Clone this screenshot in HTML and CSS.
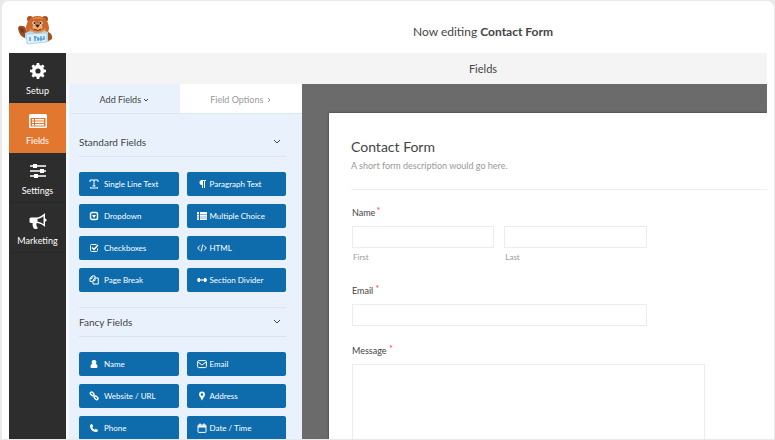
FILE: index.html
```html
<!DOCTYPE html>
<html lang="en">
<head>
    <meta charset="UTF-8">
    <meta name="viewport" content="width=device-width, initial-scale=1.0">
    <title>Form Builder</title>
    <link rel="stylesheet" href="styles.css">
</head>
<body>
    <div class="builder">
        <header class="header">
            <svg class="logo" viewBox="0 0 36 30" role="img" aria-label="Bear mascot">
                <circle cx="13" cy="4" r="3" fill="#a9501c"/>
                <circle cx="28" cy="4" r="3" fill="#a9501c"/>
                <path d="M1 13q1-3 4-2q4 0 4 4l3 5-4 3q-6-2-7-10z" fill="#9b4a20"/>
                <path d="M3 13l3 1 1 4-3-2z" fill="#6e3215"/>
                <path d="M11 6q3-5 9.500-5t9.500 5q4 7 0 13H11q-4-6 0-13z" fill="#c9682a"/>
                <path d="M14 4q7-4 13 0-6-1-13 0z" fill="#e58f49"/>
                <path d="M12 13q8 7 17 0-1 6-8 6t-9-6z" fill="#e39a5d"/>
                <ellipse cx="20.500" cy="12" rx="5" ry="3.500" fill="#edb17b"/>
                <circle cx="17" cy="8" r="1.700" fill="#f3e5d8"/>
                <circle cx="24" cy="8" r="1.700" fill="#f3e5d8"/>
                <circle cx="17.500" cy="8" r="1" fill="#30180d"/>
                <circle cx="23.500" cy="8" r="1" fill="#30180d"/>
                <path d="M18 9.500h5l-2 3h-1z" fill="#3b1c10"/>
                <path d="M17 14q4 3 7 0" fill="none" stroke="#6b2f16"/>
                <path d="M8 18l5-2 7 3 8-3 6 2 1 6-4 3-23-3z" fill="#b9dcf0"/>
                <path d="M31 17q5 2 4 7l-4 2z" fill="#a9501c"/>
                <path d="M9 19l21-1v9l-20 2z" fill="#dceffa" stroke="#8fc3e3" stroke-width=".6"/>
                <path d="M13 22v4M18 21v5M21 22v4M24 21v5M27 21v4M17 22h3M20 24h7" stroke="#3f91c6" stroke-width="1.200"/>
            </svg>
            <div class="editing">Now editing <strong>Contact Form</strong></div>
        </header>

        <div class="main">
            <nav class="sidebar">
                <a href="#setup" class="side-link">
                    <svg viewBox="0 0 16 16"><path fill-rule="evenodd" fill="currentColor" d="M6.800 0h2.400l.4 2.100 1.400.6 1.800-1.200 1.700 1.700-1.200 1.800.6 1.400 2.100.4v2.400l-2.100.4-.6 1.400 1.200 1.800-1.700 1.700-1.800-1.200-1.400.6-.4 2.100H6.800l-.4-2.100-1.400-.6-1.800 1.200-1.700-1.700 1.200-1.800-.6-1.400L0 9.200V6.800l2.100-.4.6-1.400-1.200-1.800 1.700-1.700L5 2.700l1.400-.6zM8 5.400a2.600 2.600 0 1 0 0 5.200 2.600 2.600 0 0 0 0-5.200z"/></svg>
                    <span>Setup</span>
                </a>
                <a href="#fields" class="side-link active">
                    <svg class="wide" viewBox="0 0 18 16"><path fill-rule="evenodd" fill="currentColor" d="M1.500 1h15A1.500 1.500 0 0 1 18 2.500v11a1.500 1.500 0 0 1-1.500 1.500h-15A1.500 1.500 0 0 1 0 13.500v-11A1.500 1.500 0 0 1 1.500 1zM1.500 5v8.500h15V5zM3 6h2v1.400H3zM6 6h9v1.400H6zM3 8.500h2v1.400H3zM6 8.500h9v1.400H6zM3 11h2v1.400H3zM6 11h9v1.400H6z"/></svg>
                    <span>Fields</span>
                </a>
                <a href="#settings" class="side-link">
                    <svg viewBox="0 0 16 16"><path d="M0 3h16M0 8h16M0 13h16" stroke="currentColor" stroke-width="1.600"/><path d="M3 1h4v4H3zM10 6h4v4h-4zM4 11h4v4H4z" fill="currentColor"/></svg>
                    <span>Settings</span>
                </a>
                <a href="#marketing" class="side-link">
                    <svg class="wide" viewBox="0 0 18 16"><path fill-rule="evenodd" fill="currentColor" d="M16 0v5.500a1.600 1.600 0 0 1 0 3.200V14c-2-2-5-3.600-8-3.900-1 .5-1 1.700-.2 2.300-.6 1 .3 1.700 1.200 2.500-1 1.300-3.400 1.300-4.500.4-.5-1.700-1.300-3.100-.8-5.300H2A1.500 1.500 0 0 1 .5 8.500V6A1.500 1.500 0 0 1 2 4.500h5C10 4.500 13.500 2.500 16 0zM14.500 3.200C12.600 4.700 10.700 5.600 8.500 5.900v2.900c2.200.3 4.200 1.100 6 2.500z"/></svg>
                    <span>Marketing</span>
                </a>
            </nav>

            <div class="content">
                <div class="toolbar">Fields</div>
                <div class="workspace">
                    <aside class="panel">
                        <div class="tabs">
                            <button type="button" class="tab active">Add Fields <svg viewBox="0 0 6 6"><path d="M1 2l2 2 2-2"/></svg></button>
                            <button type="button" class="tab">Field Options <svg viewBox="0 0 6 6"><path d="M2 1l2 2-2 2"/></svg></button>
                        </div>

                        <section class="group">
                            <h3 class="group-title">Standard Fields <svg viewBox="0 0 8 8"><path d="M1 2l3 3 3-3"/></svg></h3>
                            <div class="field-buttons">
                                <button type="button"><svg viewBox="0 0 10 10"><path d="M1 3V1h8v2M5 1v6M3.500 7h3M1 9h8M2 8L1 9M8 8l1 1"/></svg>Single Line Text</button>
                                <button type="button"><svg viewBox="0 0 10 10"><path class="solid" d="M9 1v1H8v7H7V2H6v7H5V6a2.500 2.500 0 0 1 0-5z"/></svg>Paragraph Text</button>
                                <button type="button"><svg viewBox="0 0 10 10"><rect x="1.500" y="1.500" width="7" height="7" rx="1.500" stroke-width="1.400"/><path class="solid" d="M3 4h4L5 7z"/></svg>Dropdown</button>
                                <button type="button"><svg viewBox="0 0 10 10"><path class="solid" d="M0 1h2v2H0zM3 1h7v2H3zM0 3.400h2v1.500H0zM3 3.400h7v1.500H3zM0 5.300h2v1.500H0zM3 5.300h7v1.500H3zM0 7.200h2V9H0zM3 7.200h7V9H3z"/></svg>Multiple Choice</button>
                                <button type="button"><svg viewBox="0 0 10 10"><path d="M8.500 5.500v2a1 1 0 0 1-1 1h-5a1 1 0 0 1-1-1v-5a1 1 0 0 1 1-1h5"/><path d="M3 4.500l2 2 4-4.500" stroke-width="1.500"/></svg>Checkboxes</button>
                                <button type="button"><svg viewBox="0 0 10 10"><path d="M3 2.500L.7 5 3 7.500M7 2.500L9.300 5 7 7.500M5.800 1.500l-1.600 7"/></svg>HTML</button>
                                <button type="button"><svg viewBox="0 0 10 10"><path d="M3.500 6.500H1V3.500L3 1h3v2M3 1v2.500H1M4 5.500l2-2.500h3.300v6H4zM6 3v2.500H4"/></svg>Page Break</button>
                                <button type="button"><svg viewBox="0 0 10 10"><path d="M1 5h8" stroke-width="1.200"/><path class="solid" d="M0 5l1-2h2v4H1zM10 5L9 3H7v4h2z"/></svg>Section Divider</button>
                            </div>
                        </section>

                        <section class="group">
                            <h3 class="group-title ruled">Fancy Fields <svg viewBox="0 0 8 8"><path d="M1 2l3 3 3-3"/></svg></h3>
                            <div class="field-buttons">
                                <button type="button"><svg viewBox="0 0 10 10"><path class="solid" d="M5 1a2.200 2.200 0 0 1 1.700 3.800C8 5 8.500 6.500 8.500 8q0 1-1 1h-5q-1 0-1-1c0-1.500.5-3 1.800-3.200A2.200 2.200 0 0 1 5 1z"/></svg>Name</button>
                                <button type="button"><svg viewBox="0 0 10 10"><rect x=".6" y="1.600" width="8.800" height="7" rx="1"/><path d="M1 3l4 3 4-3"/></svg>Email</button>
                                <button type="button"><svg viewBox="0 0 10 10"><rect x="1" y="1.500" width="4" height="2.600" rx="1.200" transform="rotate(45 3 3)" stroke-width="1.400"/><rect x="5" y="5.500" width="4" height="2.600" rx="1.200" transform="rotate(45 7 7)" stroke-width="1.400"/><path d="M4 4l2 2" stroke-width="1.400"/></svg>Website / URL</button>
                                <button type="button"><svg viewBox="0 0 10 10"><path class="solid" fill-rule="evenodd" d="M5 .5a3 3 0 0 1 3 3c0 1.500-1 2-3 6-2-4-3-4.500-3-6a3 3 0 0 1 3-3zM5 2.200a1.300 1.300 0 1 0 0 2.600 1.300 1.300 0 0 0 0-2.600z"/></svg>Address</button>
                                <button type="button"><svg viewBox="0 0 10 10"><path class="solid" d="M3 1l1.200 2.300-1 .9Q4 6 5.800 6.800l.9-1L9 7c0 1.500-1 2-2 2C4 9 1 6 1 3c0-1 .7-2 2-2z"/></svg>Phone</button>
                                <button type="button"><svg viewBox="0 0 10 10"><rect x="1" y="2" width="8" height="7.400" rx=".5"/><path d="M1 3.500h8" stroke-width="2"/><path d="M3 .5v2M7 .5v2" stroke-width="1.400"/></svg>Date / Time</button>
                            </div>
                        </section>
                    </aside>

                    <div class="canvas">
                        <form class="preview">
                            <div class="preview-head">
                                <h2>Contact Form</h2>
                                <p>A short form description would go here.</p>
                            </div>
                            <fieldset class="row">
                                <legend>Name<span class="required">*</span></legend>
                                <div class="name-inputs">
                                    <div>
                                        <input type="text" id="first">
                                        <label class="sub-label" for="first">First</label>
                                    </div>
                                    <div>
                                        <input type="text" id="last">
                                        <label class="sub-label" for="last">Last</label>
                                    </div>
                                </div>
                            </fieldset>
                            <div class="row">
                                <label for="email">Email <span class="required">*</span></label>
                                <input type="email" id="email" class="medium">
                            </div>
                            <div class="row">
                                <label for="message">Message <span class="required">*</span></label>
                                <textarea id="message"></textarea>
                            </div>
                        </form>
                    </div>
                </div>
            </div>
        </div>
    </div>
</body>
</html>
```
FILE: styles.css
```css
* {
    box-sizing: border-box;
}

body {
    margin: 0;
    background-color: #e9e9e9;
    font-family: Lato, 'Liberation Sans', sans-serif;
    font-size: 9px;
    color: #444;
}

button, input, textarea {
    font: inherit;
}

svg {
    flex: none;
}

.builder {
    display: flex;
    flex-direction: column;
    height: 100vh;
    padding: 0 7px;
    overflow: hidden;
    background-color: #fff;
    border: 1px solid #e9e9e9;
    border-width: 1px 1px 1px 2px;
    border-radius: 8px 8px 0 0;
}

/* Top header */
.header {
    display: flex;
    align-items: center;
    flex: none;
    height: 52px;
    padding-left: 8px;
}

.logo {
    width: 36px;
    height: 30px;
    margin-top: 6px;
}

.editing {
    flex: 1;
    padding: 9px 0 0 146px;
    text-align: center;
    font-size: 12px;
    line-height: 16px;
}

.main {
    display: flex;
    flex: 1;
    min-height: 0;
}

/* Dark navigation */
.sidebar {
    flex: none;
    width: 57px;
    background-color: #2d2d2d;
}

.side-link {
    display: flex;
    flex-direction: column;
    align-items: center;
    gap: 6px;
    height: 50px;
    padding-top: 10px;
    border-bottom: 1px solid #282828;
    color: #fff;
    line-height: 12px;
    text-decoration: none;
}

.side-link.active {
    background-color: #e27730;
    border-color: #e27730;
}

.side-link svg {
    width: 16px;
    height: 16px;
}

.side-link svg.wide {
    width: 18px;
}

.content {
    display: flex;
    flex-direction: column;
    flex: 1;
    min-width: 0;
}

.toolbar {
    flex: none;
    height: 31px;
    padding-left: 133px;
    background-color: #f4f4f4;
    text-align: center;
    font-size: 11px;
    line-height: 32px;
}

.workspace {
    display: flex;
    flex: 1;
    min-height: 0;
}

/* Field picker */
.panel {
    flex: none;
    width: 236px;
    overflow: hidden;
    background-color: #e9f2fc;
    border-left: 3px solid #f7fafd;
}

.tabs {
    display: flex;
    height: 30px;
    border-bottom: 1px solid #dde7ef;
}

.tab {
    flex: 11;
    padding: 2px 0 0;
    border: 0;
    background-color: #fff;
    color: #999;
}

.tab.active {
    flex: 10;
    background-color: #e9f2fc;
    color: #444;
}

.tab svg {
    width: 6px;
    height: 6px;
}

.tab path, .group-title path {
    fill: none;
    stroke: currentColor;
}

.group {
    padding: 14px 16px 15px 10px;
}

.group + .group {
    padding-top: 0;
}

.group-title {
    display: flex;
    align-items: center;
    justify-content: space-between;
    height: 29px;
    margin: 0 0 15px;
    padding-right: 5px;
    border-bottom: 1px solid #d8e3ee;
    font-size: 10px;
    font-weight: normal;
}

.group-title.ruled {
    height: 30px;
    border-top: 1px solid #d8e3ee;
}

.group-title svg {
    width: 8px;
    height: 8px;
}

.field-buttons {
    display: grid;
    grid-template-columns: 1fr 1fr;
    gap: 8px;
}

.field-buttons button {
    display: flex;
    align-items: center;
    gap: 5px;
    height: 24px;
    padding: 0 0 0 10px;
    border: 0;
    border-radius: 2px;
    background-color: #0e6cad;
    color: #fff;
    font-size: 8px;
    white-space: nowrap;
}

.field-buttons button:nth-child(even) {
    gap: 3px;
}

.field-buttons svg {
    width: 10px;
    height: 10px;
    fill: none;
    stroke: currentColor;
}

.field-buttons .solid {
    fill: currentColor;
    stroke: none;
}

/* Form preview */
.canvas {
    display: flex;
    flex: 1;
    min-width: 0;
    padding: 29px 0 0 27px;
    overflow: hidden;
    background-color: #6b6b6b;
}

.preview {
    flex: 1;
    min-width: 0;
    padding: 24px 0 0 22px;
    overflow: hidden;
    background-color: #fff;
    box-shadow: 0 0 2px #333;
}

.preview-head {
    padding-bottom: 16px;
    border-bottom: 1px solid #eee;
}

.preview-head h2 {
    margin: 0;
    font-size: 14px;
    font-weight: normal;
    line-height: 20px;
}

.preview-head p {
    margin: 2px 0 0;
    color: #999;
    line-height: 14px;
}

.row {
    margin: 17px 0 0 1px;
    padding: 0;
    border: 0;
}

.row + .row {
    margin-top: 19px;
}

.row legend, .row label {
    display: block;
    padding: 0;
    line-height: 12px;
}

.required {
    color: #ff3b3b;
    line-height: 0;
    vertical-align: 2px;
}

.row legend .required {
    margin-left: 1px;
}

.row input, .row textarea {
    display: block;
    width: 100%;
    height: 22px;
    margin-top: 7px;
    border: 1px solid #ececec;
    background-color: #fff;
}

.row input.medium, .name-inputs {
    width: 71%;
}

.row textarea {
    width: 85%;
    height: 120px;
    resize: none;
}

.name-inputs {
    display: grid;
    grid-template-columns: 1fr 1fr;
    gap: 10px;
}

.row .sub-label {
    margin: 3px 0;
    padding-left: 1px;
    color: #999;
    font-size: 8px;
}
```
